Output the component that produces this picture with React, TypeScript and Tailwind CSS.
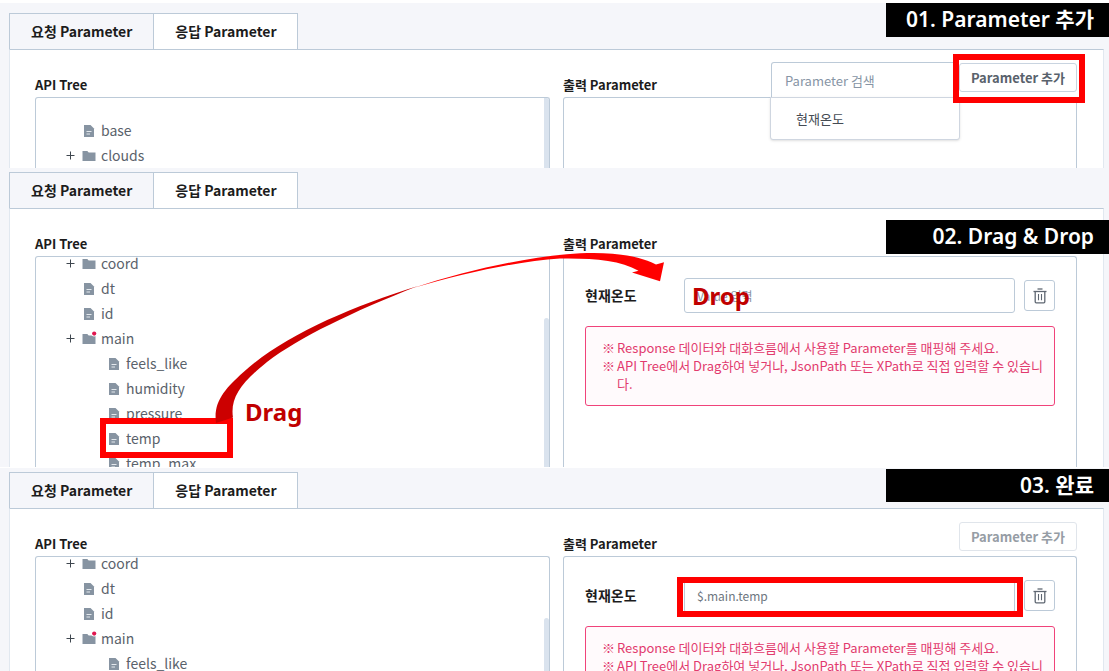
import type { ReactNode } from "react";

type NodeRow = { name: string; kind: "file" | "folder"; child?: boolean; marked?: boolean };

const SCROLLED_ROWS: NodeRow[] = [
  { name: "coord", kind: "folder" },
  { name: "dt", kind: "file" },
  { name: "id", kind: "file" },
  { name: "main", kind: "folder", marked: true },
  { name: "feels_like", kind: "file", child: true },
  { name: "humidity", kind: "file", child: true },
  { name: "pressure", kind: "file", child: true },
  { name: "temp", kind: "file", child: true },
  { name: "temp_max", kind: "file", child: true },
];

const TOP_ROWS: NodeRow[] = [
  { name: "base", kind: "file" },
  { name: "clouds", kind: "folder" },
];

function FileIcon() {
  return (
    <svg width="14" height="14" viewBox="0 0 14 14" aria-hidden="true">
      <path d="M2 1h6.5L12 4.5V13H2z" fill="#8794a2" />
      <path d="M4.5 7.5h5M4.5 10h3.5" stroke="#e3e8ed" strokeWidth="1" />
    </svg>
  );
}

function FolderIcon({ marked }: { marked?: boolean }) {
  return (
    <svg width="14" height="14" viewBox="0 0 14 14" className="overflow-visible" aria-hidden="true">
      <path d="M0.5 2h4.8l1.4 1.6h6.8V12H0.5z" fill="#8794a2" />
      {marked && <circle cx="12.2" cy="1.6" r="2.9" fill="#fff" />}
      {marked && <circle cx="12.2" cy="1.6" r="2.1" fill="#e0164f" />}
    </svg>
  );
}

function TrashIcon() {
  return (
    <svg width="14" height="16" viewBox="0 0 14 16" fill="none" stroke="#5f6772" aria-hidden="true">
      <path d="M4.5 1h5" strokeWidth="1.3" />
      <path d="M0.5 3.5h13" strokeWidth="1.3" />
      <path d="M2.2 4v9.8q0 1 1 1h7.6q1 0 1-1V4" strokeWidth="1.3" />
      <path d="M5.5 6v6.2M8.5 6v6.2" strokeWidth="1.1" />
    </svg>
  );
}

function Tree({ rows, scrolled }: { rows: NodeRow[]; scrolled?: boolean }) {
  return (
    <div className="relative flex min-h-0 flex-1 overflow-hidden rounded-t-[3px] border border-b-0 border-[#bccad8]">
      <ul className={scrolled ? "-mt-1.5 flex-1" : "flex-1 pt-5"}>
        {rows.map((r) => (
          <li key={r.name} className={r.child ? "flex h-[25px] items-center pl-[71px]" : "flex h-[25px] items-center pl-[30px]"}>
            {!r.child && (
              <span className="flex w-4 shrink-0">
                {r.kind === "folder" && (
                  <svg width="9" height="9" viewBox="0 0 9 9" aria-hidden="true">
                    <path d="M4.5 0.5v8M0.5 4.5h8" stroke="#3f474f" />
                  </svg>
                )}
              </span>
            )}
            {r.kind === "file" ? <FileIcon /> : <FolderIcon marked={r.marked} />}
            <span className="pl-[5px] text-[14px] leading-[25px] text-[#5a626b]">{r.name}</span>
          </li>
        ))}
      </ul>
      <div className={scrolled ? "mt-[61px] w-[5px] rounded-t-[3px] bg-[#dae3ee]" : "w-[5px] bg-[#dae3ee]"} />
    </div>
  );
}

function AddButton({ disabled }: { disabled?: boolean }) {
  return (
    <button
      type="button"
      disabled={disabled}
      className={
        disabled
          ? "block h-[29px] w-[118px] rounded-[3px] border border-[#e0e5eb] bg-white text-[13px] font-bold text-[#969da5]"
          : "block h-[29px] w-[118px] rounded-[3px] border border-[#c9d4e0] bg-white text-[13px] font-bold text-[#59626c]"
      }
    >
      Parameter 추가
    </button>
  );
}

function Mapping({ id, value }: { id: string; value: string }) {
  return (
    <div className="flex flex-col gap-[13px] px-[21px] pt-[21px]">
      <div className="flex items-center">
        <label htmlFor={id} className="w-[99px] shrink-0 text-[14px] font-bold text-[#1c1c1c]">
          현재온도
        </label>
        <div className="relative min-w-0 flex-1">
          <input
            id={id}
            defaultValue={value}
            placeholder="Value 입력"
            className="block h-[35px] w-full rounded-[3px] border border-[#bccad8] bg-white px-3 text-[12px] text-[#6d7680] placeholder:text-[#8795a5]"
          />
          {value ? (
            <div className="pointer-events-none absolute -bottom-1 -left-[7px] -right-2 -top-px border-6 border-[#ff0000]" />
          ) : (
            <span className="absolute left-2 top-0 text-[24px] leading-[36px] font-bold text-[#c00000] [font-family:'Noto_Sans','Noto_Sans_CJK_KR',sans-serif]">
              Drop
            </span>
          )}
        </div>
        <button
          type="button"
          aria-label="삭제"
          className="ml-[9px] flex h-[31px] w-[31px] items-center justify-center rounded-[3px] border border-[#bccad8] bg-white"
        >
          <TrashIcon />
        </button>
      </div>
      <ul className="rounded-[3px] border border-[#f0437a] bg-[#fffafc] pt-3 pr-2 pb-3 pl-4 text-[13px] leading-[18px] break-all text-[#e23a6e]">
        <li className="flex">
          <span className="w-[15px] shrink-0">※</span>
          <span>Response 데이터와 대화흐름에서 사용할 Parameter를 매핑해 주세요.</span>
        </li>
        <li className="flex">
          <span className="w-[15px] shrink-0">※</span>
          <span>API Tree에서 Drag하여 넣거나, JsonPath 또는 XPath로 직접 입력할 수 있습니다.</span>
        </li>
      </ul>
    </div>
  );
}

function Step({
  className,
  badge,
  badgeClass,
  tree,
  actions,
  children,
  overlay,
}: {
  className: string;
  badge: string;
  badgeClass: string;
  tree: ReactNode;
  actions?: ReactNode;
  children?: ReactNode;
  overlay?: ReactNode;
}) {
  return (
    <section className={`relative flex flex-col overflow-hidden bg-[#f5f6fa] pr-[5px] pl-[9px] ${className}`}>
      <div role="tablist" className="flex h-9 shrink-0 text-[14px] font-bold text-[#1c1c1c]">
        <button type="button" role="tab" aria-selected="false" className="border border-b-0 border-[#bccad8] px-[21px]">
          요청 Parameter
        </button>
        <button type="button" role="tab" aria-selected="true" className="border border-b-0 border-l-0 border-[#bccad8] bg-white pr-5 pl-[21px]">
          응답 Parameter
        </button>
      </div>
      <div className="grid min-h-0 flex-1 grid-cols-[515fr_514fr] gap-[13px] border border-b-0 border-x-[#e1e8f0] border-t-[#bccad8] bg-white pr-[26px] pl-[25px]">
        <div className="flex min-h-0 min-w-0 flex-col">
          <h2 className="flex h-[47px] shrink-0 items-end pb-0.5 text-[13px] leading-5 font-bold text-[#1c1c1c]">API Tree</h2>
          {tree}
        </div>
        <div className="flex min-h-0 min-w-0 flex-col">
          <div className="flex h-[47px] shrink-0 items-end">
            <h2 className="flex-1 pb-0.5 text-[13px] leading-5 font-bold text-[#1c1c1c]">출력 Parameter</h2>
            {actions}
          </div>
          <div className="min-h-0 flex-1 rounded-t-[3px] border border-b-0 border-[#bccad8]">{children}</div>
        </div>
      </div>
      {overlay}
      <div
        className={`absolute right-0 flex w-[223px] items-center justify-end bg-black pr-[15px] text-[21px] font-semibold whitespace-nowrap text-white [font-family:'Noto_Sans','Noto_Sans_CJK_KR',sans-serif] ${badgeClass}`}
      >
        {badge}
      </div>
    </section>
  );
}

function DragArrow() {
  return (
    <svg className="pointer-events-none absolute top-0 left-0" width="700" height="299" viewBox="0 168 700 299" aria-hidden="true">
      <path
        d="M216 423C213 401 226 388 243 372.500C283 336 348 308 418 286C352 312 300 337 267 362C241 383 230 398 233 417.500Z"
        fill="#cc0000"
      />
      <path
        d="M413 288C465 271 517 259 566.700 254.300C603 251 636 254 656 264.500L664 262.300L660 281.300L632 272.500L638.500 270.700C620 260 592 258 560 258.500C516 261.500 465 273 413 288Z"
        fill="#ff0000"
      />
    </svg>
  );
}

export default function App() {
  return (
    <main className="bg-white pt-[3px] [font-family:'Noto_Sans_CJK_KR',sans-serif]">
      <Step
        className="h-[165px] pt-[10px]"
        badge="01. Parameter 추가"
        badgeClass="top-0 h-[34px]"
        tree={<Tree rows={TOP_ROWS} />}
        actions={
          <>
            <div className="relative w-[188px]">
              <input
                aria-label="Parameter 검색"
                placeholder="Parameter 검색"
                className="block h-[35px] w-full rounded-t-[3px] border border-b-0 border-[#bccad8] bg-white px-[13px] text-[13px] placeholder:text-[#8795a5]"
              />
              <div className="absolute top-[35px] -left-px z-10 w-[190px] rounded-b-[3px] border border-[#cfd6e0] bg-white px-[25px] text-[13px] leading-[41px] text-[#444b53] shadow-sm">
                현재온도
              </div>
            </div>
            <div className="relative z-20 pb-[5px]">
              <AddButton />
              <div className="pointer-events-none absolute -top-[9px] -right-2 -bottom-[6px] -left-[6px] border-6 border-[#ff0000]" />
            </div>
          </>
        }
      />
      <Step
        className="h-[299px] pt-1"
        badge="02. Drag & Drop"
        badgeClass="top-[52px] h-[34px]"
        tree={<Tree rows={SCROLLED_ROWS} scrolled />}
        overlay={
          <>
            <div className="absolute top-[250px] left-[100px] h-10 w-[133px] border-6 border-[#ff0000]" />
            <DragArrow />
            <span className="absolute top-[226px] left-[245px] text-[24px] leading-[36px] font-bold text-[#c00000] [font-family:'Noto_Sans','Noto_Sans_CJK_KR',sans-serif]">
              Drag
            </span>
          </>
        }
      >
        <Mapping id="mapping-empty" value="" />
      </Step>
      <Step
        className="mt-px h-[203px] pt-1"
        badge="03. 완료"
        badgeClass="top-px h-[33px]"
        tree={<Tree rows={SCROLLED_ROWS} scrolled />}
        actions={
          <div className="pb-[5px]">
            <AddButton disabled />
          </div>
        }
      >
        <Mapping id="mapping-filled" value="$.main.temp" />
      </Step>
    </main>
  );
}
